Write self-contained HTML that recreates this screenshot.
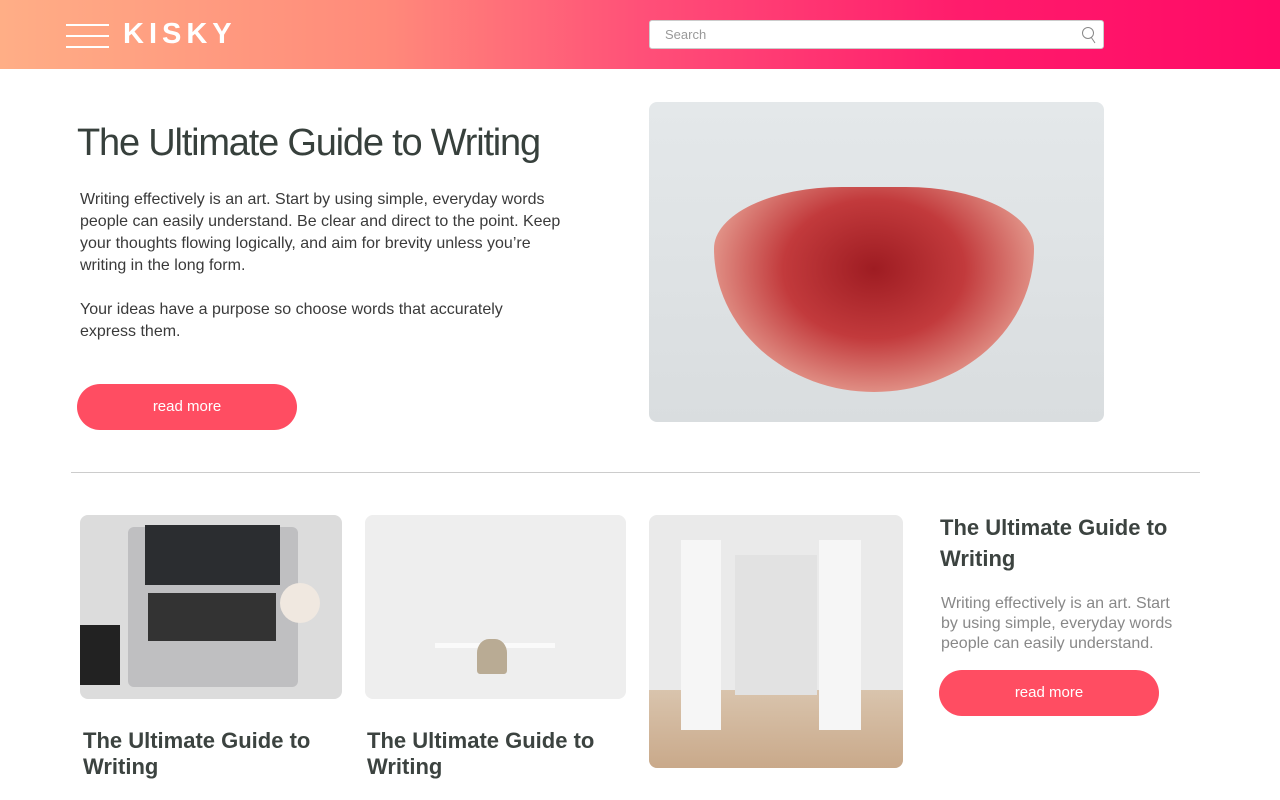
<!DOCTYPE html>
<html><head><style>
*{margin:0;padding:0;box-sizing:border-box}
body{width:1280px;height:800px;overflow:hidden;background:#fff;font-family:"Liberation Sans",sans-serif;position:relative}
.hdr{position:absolute;left:0;top:0;width:1280px;height:69px;background:linear-gradient(90deg,#ffae86 0%,#ff8a7a 30%,#ff5078 50%,#ff1c6c 75%,#ff0a66 100%)}
.hb{position:absolute;left:66px;width:43px;height:2px;background:#fff}
.logo{position:absolute;left:123px;top:18px;color:#fff;font-size:29px;line-height:32px;font-weight:bold;letter-spacing:5px}
.search{position:absolute;left:649px;top:20px;width:455px;height:29px;background:#fff;border:1px solid #ccc;border-radius:3px;font-size:13px;color:#999;padding:6px 15px}
h1{position:absolute;left:77px;top:122px;font-size:38px;font-weight:normal;color:#37403c;letter-spacing:-1.2px}
.p{position:absolute;left:80px;font-size:16px;line-height:22px;color:#3a3a3a;width:490px}
.btn{position:absolute;width:220px;height:46px;border-radius:23px;background:#ff4d62;color:#fff;font-size:15px;text-align:center;line-height:46px}
.img{position:absolute;border-radius:8px;overflow:hidden}
hr{position:absolute;left:71px;top:472px;width:1129px;border:0;border-top:1px solid #ccc}
.t{position:absolute;font-size:22px;font-weight:bold;color:#3c4340;line-height:26px}
</style></head><body>
<div class="hdr">
<div class="hb" style="top:24px"></div><div class="hb" style="top:35px"></div><div class="hb" style="top:46px"></div>
<div class="logo">KISKY</div>
<div class="search">Search<svg style="position:absolute;right:6px;top:5px" width="16" height="18" viewBox="0 0 16 18"><circle cx="7" cy="7" r="5.5" fill="none" stroke="#888" stroke-width="1"/><path d="M10 11 L14 17" stroke="#888"/></svg></div>
</div>
<h1>The Ultimate Guide to Writing</h1>
<div class="p" style="top:189px">Writing effectively is an art. Start by using simple, everyday words people can easily understand. Be clear and direct to the point. Keep your thoughts flowing logically, and aim for brevity unless you’re writing in the long form.</div>
<div class="p" style="top:299px;width:440px">Your ideas have a purpose so choose words that accurately express them.</div>
<div class="btn" style="left:77px;top:384px">read more</div>
<div class="img" style="left:649px;top:102px;width:455px;height:320px;background:linear-gradient(180deg,#e4e8ea,#d9dddf)">
<div style="position:absolute;left:65px;top:85px;width:320px;height:205px;border-radius:40% 40% 50% 50%/30% 30% 70% 70%;background:radial-gradient(ellipse at 50% 40%,#9e1c22 0%,#c23a3c 40%,#e49a8e 75%,#eab0a4 100%)"></div>
</div>
<hr>
<div class="img" style="left:80px;top:515px;width:262px;height:184px;background:#dcdcdc">
<div style="position:absolute;left:48px;top:12px;width:170px;height:160px;background:#bfbfc1;border-radius:6px"></div>
<div style="position:absolute;left:65px;top:10px;width:135px;height:60px;background:#2b2d30"></div>
<div style="position:absolute;left:68px;top:78px;width:128px;height:48px;background:#333"></div>
<div style="position:absolute;left:0;top:110px;width:40px;height:60px;background:#222"></div>
<div style="position:absolute;left:200px;top:68px;width:40px;height:40px;border-radius:50%;background:#f0e8e0"></div>
</div>
<div class="img" style="left:365px;top:515px;width:261px;height:184px;background:#eeeeee">
<div style="position:absolute;left:70px;top:128px;width:120px;height:5px;background:#fafafa"></div>
<div style="position:absolute;left:112px;top:124px;width:30px;height:35px;background:#b9ab94;border-radius:40% 40% 10% 10%"></div>
</div>
<div class="img" style="left:649px;top:515px;width:254px;height:253px;background:#eaeaea">
<div style="position:absolute;left:0;top:175px;width:254px;height:78px;background:linear-gradient(#d9c4ad,#c9a98a)"></div>
<div style="position:absolute;left:32px;top:25px;width:40px;height:190px;background:#f6f6f6"></div>
<div style="position:absolute;left:170px;top:25px;width:42px;height:190px;background:#f6f6f6"></div>
<div style="position:absolute;left:86px;top:40px;width:82px;height:140px;background:#e2e2e2"></div>
</div>
<div class="t" style="left:940px;top:512px;width:250px;line-height:31px">The Ultimate Guide to Writing</div>
<div style="position:absolute;left:941px;top:594px;width:250px;font-size:16px;line-height:20px;color:#888">Writing effectively is an art. Start by using simple, everyday words people can easily understand.</div>
<div class="btn" style="left:939px;top:670px">read more</div>
<div class="t" style="left:83px;top:728px;width:260px">The Ultimate Guide to Writing</div>
<div class="t" style="left:367px;top:728px;width:260px">The Ultimate Guide to Writing</div>
</body></html>
